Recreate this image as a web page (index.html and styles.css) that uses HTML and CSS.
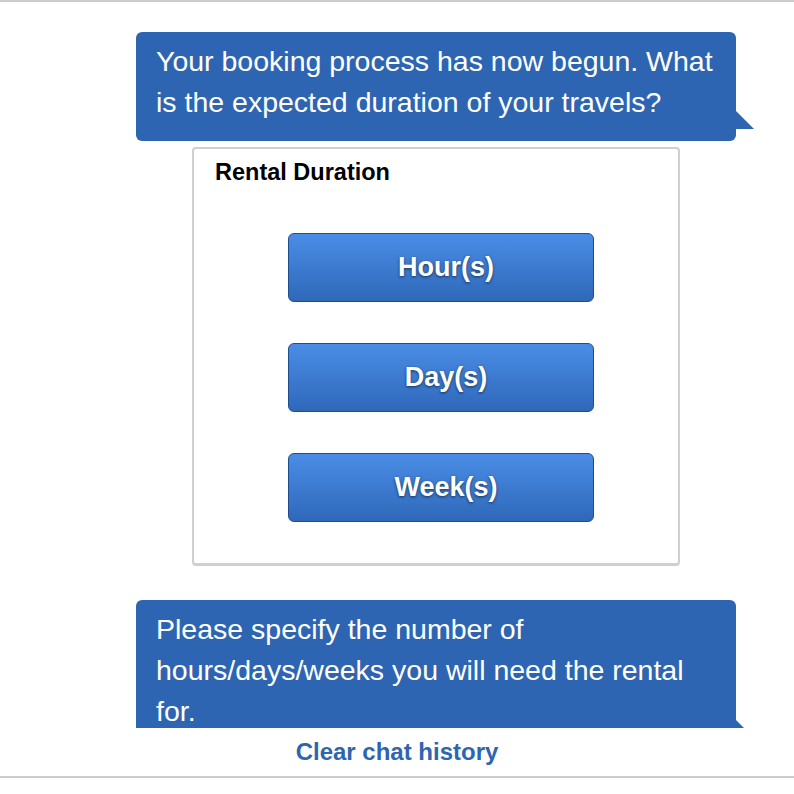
FILE: index.html
```html
<!DOCTYPE html>
<html>
<head>
<meta charset="utf-8">
<link rel="stylesheet" href="styles.css">
</head>
<body>
<div class="chat">
  <div class="bubble">
    <p>Your booking process has now begun. What is the expected duration of your travels?</p>
    <span class="tail"></span>
  </div>
  <div class="card">
    <div class="card-title">Rental Duration</div>
    <div class="options">
      <button class="opt">Hour(s)</button>
      <button class="opt">Day(s)</button>
      <button class="opt">Week(s)</button>
    </div>
  </div>
  <div class="bubble second">
    <p>Please specify the number of hours/days/weeks you will need the rental for.</p>
    <span class="tail"></span>
  </div>
</div>
<div class="footer">
  <a class="clear" href="#">Clear chat history</a>
</div>
</body>
</html>
```
FILE: styles.css
```css
html, body {
  margin: 0;
  padding: 0;
  background: #fff;
  font-family: "Liberation Sans", Arial, sans-serif;
}
.chat {
  border-top: 2px solid #cccccc;
  height: 696px;
  padding-top: 30px;
  overflow: hidden;
}
.bubble {
  position: relative;
  margin-left: 136px;
  width: 600px;
  box-sizing: border-box;
  background: #2e65b2;
  color: #fff;
  border-radius: 6px;
  padding: 9px 20px 18px;
}
.bubble p {
  margin: 0;
  font-size: 28.5px;
  line-height: 41px;
}
.tail {
  position: absolute;
  right: -18px;
  bottom: 12px;
  width: 0;
  height: 0;
  border-top: 19px solid transparent;
  border-left: 19px solid #2e65b2;
}
.second {
  margin-top: 34px;
}
.card {
  margin-top: 6px;
  margin-left: 192px;
  width: 488px;
  box-sizing: border-box;
  border: 2px solid #cfcfcf;
  border-bottom-width: 3px;
  border-radius: 4px;
  padding: 10px 0 41px;
}
.card-title {
  padding-left: 21px;
  font-weight: bold;
  font-size: 23.5px;
  line-height: 26px;
  color: #000;
}
.options {
  display: flex;
  flex-direction: column;
  gap: 41px;
  padding-left: 94px;
  padding-top: 48px;
}
.opt {
  width: 306px;
  height: 69px;
  border: 1.5px solid #1f4c8c;
  border-radius: 6px;
  background: linear-gradient(#4a8de6, #2f68b9);
  color: #fff;
  font-family: "Liberation Sans", Arial, sans-serif;
  font-weight: bold;
  font-size: 27px;
  text-shadow: 0 1px 3px rgba(0,0,0,0.6);
  padding: 0 0 0 10px;
}
.footer {
  height: 48px;
  border-bottom: 2px solid #cccccc;
  display: flex;
  justify-content: center;
}
.clear {
  margin-top: 10px;
  font-size: 24px;
  font-weight: bold;
  color: #2e64b0;
  text-decoration: none;
}
```
